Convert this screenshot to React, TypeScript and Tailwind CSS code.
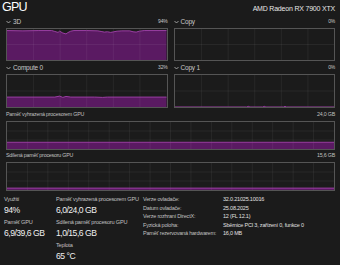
import React from "react";

type Pt = [number, number];

const threeD: Pt[] = [
  [0, 95], [10, 94], [20, 95], [28, 95], [30, 92], [32, 89], [33, 93], [35, 87], [37, 84], [38, 88],
  [40, 93], [42, 95], [50, 95], [57, 94], [59, 92], [61, 90], [63, 91], [65, 89], [67, 91], [69, 93],
  [72, 94], [77, 94], [79, 91], [81, 90], [83, 93], [86, 95], [100, 95],
];
const compute: Pt[] = [
  [0, 31], [30, 31], [33, 34], [35, 30], [37, 33], [40, 31], [55, 31], [60, 30], [63, 31], [100, 31],
];
const copy: Pt[] = [[0, 0], [100, 0]];
const copy1: Pt[] = [[0, 0], [45, 0], [46, 2], [47, 0], [55, 0], [56, 2], [57, 0], [68, 0], [69, 2], [70, 0], [100, 0]];
const dedicated: Pt[] = [[0, 25], [100, 25]];
const shared: Pt[] = [[0, 7], [100, 7]];

function Graph({ data, cols, rows, className }: { data: Pt[]; cols: number; rows: number; className: string }) {
  const line = data.map(([x, v]) => `${x},${100 - v}`).join(" ");
  const area = `0,100 ${line} 100,100`;
  const hasFill = data.some(([, v]) => v > 0);
  return (
    <div className={"border border-[#555555] " + className}>
      <svg className="block w-full h-full" viewBox="0 0 100 100" preserveAspectRatio="none">
        {hasFill && <polygon points={area} fill="#5a1a62" />}
        {Array.from({ length: cols - 1 }, (_, i) => {
          const x = ((i + 1) * 100) / cols;
          return <line key={"v" + i} x1={x} x2={x} y1={0} y2={100} stroke="#ffffff" strokeOpacity={0.06} vectorEffect="non-scaling-stroke" />;
        })}
        {Array.from({ length: rows - 1 }, (_, i) => {
          const y = ((i + 1) * 100) / rows;
          return <line key={"h" + i} x1={0} x2={100} y1={y} y2={y} stroke="#ffffff" strokeOpacity={0.06} vectorEffect="non-scaling-stroke" />;
        })}
        {hasFill && <polyline points={line} fill="none" stroke="#9a3ea2" strokeWidth={1} vectorEffect="non-scaling-stroke" />}
      </svg>
    </div>
  );
}

function Chevron() {
  return (
    <svg width="5" height="4" viewBox="0 0 5 4" className="mr-[2px]">
      <path d="M0.5 1 L2.5 3 L4.5 1" fill="none" stroke="#bdbdbd" strokeWidth="0.8" />
    </svg>
  );
}

function GraphLabel({ name, value, className }: { name: string; value: string; className: string }) {
  return (
    <div className={"flex items-center justify-between text-[6.5px] tracking-[-0.2px] text-[#c8c8c8] " + className}>
      <span className="flex items-center">
        <Chevron />
        {name}
      </span>
      <span className="text-[5px]">{value}</span>
    </div>
  );
}

function Stat({ label, value }: { label: string; value: string }) {
  return (
    <div>
      <div className="h-[8px] leading-[8px] text-[5.6px] tracking-[-0.2px] text-[#c0c0c0] whitespace-nowrap">{label}</div>
      <div className="h-[15px] leading-[15px] text-[8.6px] tracking-[-0.5px] text-[#f0f0f0] whitespace-nowrap">{value}</div>
    </div>
  );
}

const details: [string, string][] = [
  ["Verze ovladače:", "32.0.21025.10016"],
  ["Datum ovladače:", "25.08.2025"],
  ["Verze rozhraní DirectX:", "12 (FL 12.1)"],
  ["Fyzická poloha:", "Sběrnice PCI 3, zařízení 0, funkce 0"],
  ["Paměť rezervovaná hardwarem:", "16,0 MB"],
];

export default function App() {
  return (
    <div className="w-[340px] h-[265px] overflow-hidden bg-[#1b1b1b] text-white font-['Liberation_Sans',Arial,sans-serif]">
      <div className="flex items-baseline justify-between h-[17px] pl-[2px] pr-[5px]">
        <span className="text-[12.5px] tracking-[-0.8px] leading-none pt-[1px]">GPU</span>
        <span className="text-[7px] tracking-[-0.2px] text-[#e6e6e6]">AMD Radeon RX 7900 XTX</span>
      </div>

      <div className="flex gap-[6px] pl-[6px] pr-[5px]">
        <div className="flex-1 flex flex-col">
          <GraphLabel name="3D" value="94%" className="h-[11px] pb-[2px]" />
          <Graph data={threeD} cols={6} rows={2} className="h-[33px]" />
          <GraphLabel name="Compute 0" value="32%" className="h-[13px]" />
          <Graph data={compute} cols={6} rows={2} className="h-[34px]" />
        </div>
        <div className="flex-1 flex flex-col">
          <GraphLabel name="Copy" value="0%" className="h-[11px] pb-[2px]" />
          <Graph data={copy} cols={6} rows={2} className="h-[33px]" />
          <GraphLabel name="Copy 1" value="0%" className="h-[13px]" />
          <Graph data={copy1} cols={6} rows={2} className="h-[34px]" />
        </div>
      </div>

      <div className="flex flex-col pl-[6px] pr-[5px]">
        <div className="flex items-center justify-between h-[13px] text-[5.3px] tracking-[-0.2px] text-[#c0c0c0]">
          <span>Paměť vyhrazená procesorem GPU</span>
          <span>24,0 GB</span>
        </div>
        <Graph data={dedicated} cols={16} rows={3} className="h-[29px]" />
        <div className="flex items-center justify-between h-[12px] text-[5.3px] tracking-[-0.2px] text-[#c0c0c0]">
          <span>Sdílená paměť procesoru GPU</span>
          <span>15,6 GB</span>
        </div>
        <Graph data={shared} cols={16} rows={3} className="h-[29px]" />
      </div>

      <div className="flex pt-[4px] pl-[4px]">
        <div className="w-[52px]">
          <Stat label="Využití" value="94%" />
          <Stat label="Paměť GPU" value="6,9/39,6 GB" />
        </div>
        <div className="w-[87px]">
          <Stat label="Paměť vyhrazená procesorem GPU" value="6,0/24,0 GB" />
          <Stat label="Sdílená paměť procesoru GPU" value="1,0/15,6 GB" />
          <Stat label="Teplota" value="65 °C" />
        </div>
        <div className="flex-1 text-[5.5px] tracking-[-0.2px] text-[#c0c0c0]">
          {details.map(([k, v]) => (
            <div key={k} className="flex h-[8.5px] leading-[8.5px] whitespace-nowrap">
              <span className="w-[80px]">{k}</span>
              <span className="text-[#e0e0e0]">{v}</span>
            </div>
          ))}
        </div>
      </div>
    </div>
  );
}
